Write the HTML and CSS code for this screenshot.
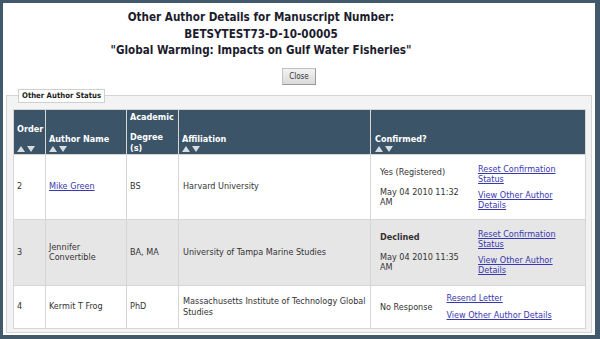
FILE: index.html
```html
<!DOCTYPE html>
<html lang="en">
<head>
    <meta charset="UTF-8">
    <title>Other Author Details</title>
    <link rel="stylesheet" href="styles.css">
</head>
<body>
    <div class="frame">
        <h1 class="title">
            Other Author Details for Manuscript Number:<br>
            BETSYTEST73-D-10-00005<br>
            "Global Warming: Impacts on Gulf Water Fisheries"
        </h1>
        <div class="actions">
            <button type="button" class="btn">Close</button>
        </div>
        <fieldset class="status-box">
            <legend>Other Author Status</legend>
            <table class="authors">
                <colgroup>
                    <col class="c-order">
                    <col class="c-name">
                    <col class="c-degree">
                    <col class="c-aff">
                    <col class="c-conf">
                </colgroup>
                <thead>
                    <tr>
                        <th><div class="order">Order</div><div class="sort"><i class="up"></i><i class="down"></i></div></th>
                        <th><div>Author Name</div><div class="sort"><i class="up"></i><i class="down"></i></div></th>
                        <th class="degree"><div class="acad">Academic</div><div>Degree<br>(s)</div></th>
                        <th><div>Affiliation</div><div class="sort"><i class="up"></i><i class="down"></i></div></th>
                        <th class="conf-head"><div>Confirmed?</div><div class="sort"><i class="up"></i><i class="down"></i></div></th>
                    </tr>
                </thead>
                <tbody>
                    <tr class="row-tall">
                        <td>2</td>
                        <td><a href="#">Mike Green</a></td>
                        <td>BS</td>
                        <td>Harvard University</td>
                        <td class="conf">
                            <div class="conf-inner">
                                <div class="state wide">
                                    <p>Yes (Registered)</p>
                                    <p>May 04 2010 11:32 AM</p>
                                </div>
                                <div class="links narrow">
                                    <a href="#">Reset Confirmation Status</a>
                                    <a href="#">View Other Author Details</a>
                                </div>
                            </div>
                        </td>
                    </tr>
                    <tr class="row-tall2 alt">
                        <td>3</td>
                        <td>Jennifer Convertible</td>
                        <td>BA, MA</td>
                        <td>University of Tampa Marine Studies</td>
                        <td class="conf">
                            <div class="conf-inner">
                                <div class="state wide">
                                    <p><b>Declined</b></p>
                                    <p>May 04 2010 11:35 AM</p>
                                </div>
                                <div class="links narrow">
                                    <a href="#">Reset Confirmation Status</a>
                                    <a href="#">View Other Author Details</a>
                                </div>
                            </div>
                        </td>
                    </tr>
                    <tr class="row-short">
                        <td>4</td>
                        <td>Kermit T Frog</td>
                        <td>PhD</td>
                        <td>Massachusetts Institute of Technology Global Studies</td>
                        <td class="conf">
                            <div class="conf-inner spaced">
                                <div class="state">
                                    <p>No Response</p>
                                </div>
                                <div class="links loose">
                                    <a href="#">Resend Letter</a>
                                    <a href="#">View Other Author Details</a>
                                </div>
                            </div>
                        </td>
                    </tr>
                </tbody>
            </table>
        </fieldset>
    </div>
</body>
</html>
```

FILE: styles.css
```css
body {
    margin: 0;
    font-family: 'DejaVu Sans Condensed', 'DejaVu Sans', sans-serif;
    font-stretch: condensed;
    color: #333;
    background: #fff;
}

.frame {
    box-sizing: border-box;
    height: 339px;
    border-style: solid;
    border-color: #41596b;
    border-width: 3px 5px 4px 3px;
    background: #fff;
}

/* title block sits a little left of centre, as in the original popup */
.title {
    margin: 6px 0 0;
    padding-right: 76px;
    font-size: 11.6px;
    line-height: 16.5px;
    font-weight: bold;
    text-align: center;
    color: #1c1c2e;
}

.actions {
    text-align: center;
    margin-top: 5px;
}

.btn {
    font-family: inherit;
    font-size: 8px;
    color: #333;
    width: 34px;
    height: 17px;
    padding: 0;
    border: 1px solid #c0c0c0;
    border-right-color: #999;
    border-bottom-color: #999;
    background: linear-gradient(#f2f2f2, #dadada);
}

.status-box {
    margin: 4px 3px 0;
    padding: 6px 5px 3px 6px;
    border: 1px solid #d4d4d4;
    background: #f3f3f3;
    min-width: 0;
}

.status-box legend {
    margin-left: 5px;
    padding: 1px 3px 2px;
    font-size: 7.7px;
    font-weight: bold;
    color: #222;
    background: #fff;
    border: 1px solid #d0d0d0;
}

.authors {
    width: 573px;
    border-collapse: collapse;
    table-layout: fixed;
    font-size: 9px;
    line-height: 10.5px;
}

.c-order { width: 32px; }
.c-name { width: 81px; }
.c-degree { width: 52px; }
.c-aff { width: 192px; }

.authors th,
.authors td {
    border: 1px solid #d6d6d6;
    text-align: left;
    padding: 0 3px;
}

.authors th {
    box-sizing: border-box;
    height: 43px;
    padding: 2px 3px 0;
    background: #3b5467;
    color: #fff;
    font-weight: bold;
    vertical-align: bottom;
    line-height: 12px;
}

.authors th .order {
    margin-bottom: 10px;
}

.authors th.degree {
    vertical-align: top;
    line-height: 11px;
}

.authors th.degree .acad {
    margin-bottom: 9px;
}

.authors th.conf-head {
    padding-left: 4px;
}

.sort {
    display: flex;
    gap: 2px;
    height: 9px;
    align-items: center;
}

.sort i {
    width: 0;
    height: 0;
    border-left: 4px solid transparent;
    border-right: 4px solid transparent;
}

.sort .up {
    border-bottom: 6px solid #d7dde2;
}

.sort .down {
    border-top: 6px solid #d7dde2;
}

.authors td {
    background: #fff;
    vertical-align: middle;
}

.authors td:nth-child(4) {
    padding-left: 4px;
}

.row-tall td { height: 64px; }
.row-tall2 td { height: 65px; }
.row-short td { height: 42px; }

.authors tr.alt td {
    background: #e6e6e6;
}

.authors a {
    color: #3838b0;
}

.authors td.conf {
    padding-left: 9px;
}

.conf-inner {
    display: flex;
    align-items: center;
    gap: 8px;
}

.conf-inner.spaced {
    gap: 14px;
}

.state p {
    margin: 0;
    line-height: 10px;
}

.state p + p {
    margin-top: 10px;
}

.state.wide {
    width: 90px;
}

.links {
    display: flex;
    flex-direction: column;
    gap: 6px;
    line-height: 10px;
}

.links.narrow {
    width: 86px;
}

.links.loose {
    gap: 7px;
}
```
